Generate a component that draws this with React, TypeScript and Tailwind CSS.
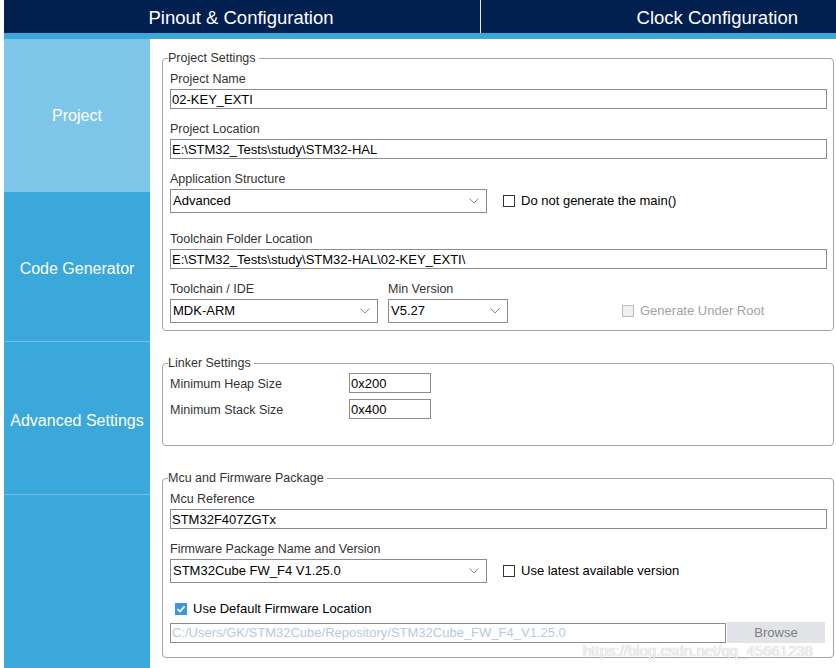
import type { ReactNode } from 'react'

const font = { fontFamily: '"Liberation Sans", Arial, sans-serif' }

function Chevron() {
  return (
    <svg width="10" height="6" viewBox="0 0 10 6" className="shrink-0">
      <path d="M0.5 0.5 L5 5 L9.5 0.5" fill="none" stroke="#8a8a8a" strokeWidth="1" />
    </svg>
  )
}

function Field({ value, className = '' }: { value: string; className?: string }) {
  return (
    <div className={`h-[20px] border border-[#8c8c8c] bg-white pl-[1px] flex items-center text-[13px] text-black leading-none ${className}`}>
      {value}
    </div>
  )
}

function Select({ value, className = '' }: { value: string; className?: string }) {
  return (
    <div className={`h-[24px] border border-[#8c8c8c] bg-white pl-[2px] pr-[7px] flex items-center justify-between text-[13px] text-black ${className}`}>
      <span>{value}</span>
      <Chevron />
    </div>
  )
}

function Check({ label, checked, disabled }: { label: string; checked?: boolean; disabled?: boolean }) {
  return (
    <div className="flex items-center gap-[6px] text-[13px]">
      {checked ? (
        <div className="w-[12px] h-[12px] bg-[#3e97dc] flex items-center justify-center">
          <svg width="10" height="10" viewBox="0 0 10 10">
            <path d="M1.5 5.2 L4 7.6 L8.6 2.4" fill="none" stroke="white" strokeWidth="1.6" />
          </svg>
        </div>
      ) : (
        <div className={`w-[12px] h-[12px] border ${disabled ? 'border-[#bcbcbc] bg-[#f0f0f0]' : 'border-[#333] bg-white'}`} />
      )}
      <span className={disabled ? 'text-[#a3a3a3]' : 'text-black'}>{label}</span>
    </div>
  )
}

function Label({ children, className = '' }: { children: ReactNode; className?: string }) {
  return <div className={`h-[15px] leading-[15px] text-[12.5px] text-[#333] ${className}`}>{children}</div>
}

function Group({ title, className = '', children }: { title: string; className?: string; children: ReactNode }) {
  return (
    <fieldset className={`border border-[#a5a5a5] rounded-[4px] pl-[7px] pr-[6px] ${className}`}>
      <legend className="-ml-[2px] pr-[3px] h-[16px] leading-[16px] text-[12.5px] text-[#333]">{title}</legend>
      {children}
    </fieldset>
  )
}

const sideItems = [
  { name: 'Project', h: 'h-[153px]', active: true, pad: 'pt-[2px]' },
  { name: 'Code Generator', h: 'h-[150px]', pad: 'pt-[4px]' },
  { name: 'Advanced Settings', h: 'h-[153px]', pad: 'pt-[6px]' },
]

export default function App() {
  return (
    <div className="relative w-[836px] h-[668px] overflow-hidden bg-white pl-[4px] flex flex-col" style={font}>
      {/* Top tabs */}
      <div className="h-[33px] bg-[#01204f] flex text-white text-[18.5px] shrink-0">
        <div className="w-[476px] pt-[3px] pr-[2px] flex items-center justify-center">Pinout &amp; Configuration</div>
        <div className="w-[1px] bg-[#e8ecf2]" />
        <div className="flex-1 pt-[3px] flex items-center justify-end pr-[38px]">Clock Configuration</div>
      </div>
      <div className="h-[6px] bg-[#3ba8dc] shrink-0" />

      <div className="flex flex-1 min-h-0">
        {/* Sidebar */}
        <div className="w-[146px] bg-[#3aa8db] flex flex-col text-white text-[16px]">
          {sideItems.map(s => (
            <div
              key={s.name}
              className={`${s.h} ${s.pad} flex items-center justify-center border-b ${s.active ? 'bg-[#7dc6ea] border-[#7dc6ea]' : 'border-[#74c0e8]'}`}
            >
              {s.name}
            </div>
          ))}
          <div className="flex-1" />
        </div>

        {/* Main */}
        <div className="flex-1 pl-[12px] pr-[2px]">
          <Group title="Project Settings" className="mt-[11px] pb-[7px]">
            <Label className="mt-[6px]">Project Name</Label>
            <Field value="02-KEY_EXTI" className="mt-[2px]" />
            <Label className="mt-[13px]">Project Location</Label>
            <Field value="E:\STM32_Tests\study\STM32-HAL" className="mt-[2px]" />
            <Label className="mt-[13px]">Application Structure</Label>
            <div className="mt-[2px] flex items-center">
              <Select value="Advanced" className="w-[317px]" />
              <div className="ml-[16px]">
                <Check label="Do not generate the main()" />
              </div>
            </div>
            <Label className="mt-[19px]">Toolchain Folder Location</Label>
            <Field value="E:\STM32_Tests\study\STM32-HAL\02-KEY_EXTI\" className="mt-[2px]" />
            <div className="mt-[13px] flex items-end">
              <div className="w-[208px]">
                <Label>Toolchain / IDE</Label>
                <Select value="MDK-ARM" className="mt-[2px]" />
              </div>
              <div className="ml-[10px] w-[120px]">
                <Label>Min Version</Label>
                <Select value="V5.27" className="mt-[2px]" />
              </div>
              <div className="ml-[114px] h-[24px] flex items-center">
                <Check label="Generate Under Root" disabled />
              </div>
            </div>
          </Group>

          <Group title="Linker Settings" className="mt-[24px] pb-[26px]">
            <div className="mt-[2px] flex flex-col gap-[6px]">
              {[
                ['Minimum Heap Size', '0x200'],
                ['Minimum Stack Size', '0x400'],
              ].map(([l, v]) => (
                <div key={l} className="flex items-center h-[20px]">
                  <div className="w-[179px] pt-[2px] text-[12.5px] text-[#333]">{l}</div>
                  <Field value={v} className="w-[82px]" />
                </div>
              ))}
            </div>
          </Group>

          <Group title="Mcu and Firmware Package" className="mt-[24px] pb-[14px]">
            <Label className="mt-[6px]">Mcu Reference</Label>
            <Field value="STM32F407ZGTx" className="mt-[2px]" />
            <Label className="mt-[13px]">Firmware Package Name and Version</Label>
            <div className="mt-[2px] flex items-center">
              <Select value="STM32Cube FW_F4 V1.25.0" className="w-[317px]" />
              <div className="ml-[16px]">
                <Check label="Use latest available version" />
              </div>
            </div>
            <div className="mt-[19px] pl-[5px] h-[14px] flex items-center">
              <Check label="Use Default Firmware Location" checked />
            </div>
            <div className="mt-[6px] flex items-center">
              <div className="w-[556px] h-[20px] border border-[#8c8c8c] bg-white pl-[1px] flex items-center text-[13px] text-[#b7c9de]">
                C:/Users/GK/STM32Cube/Repository/STM32Cube_FW_F4_V1.25.0
              </div>
              <div className="ml-[1px] w-[98px] h-[21px] bg-[#e1e3e6] flex items-center justify-center text-[13px] text-[#7f7f7f]">
                Browse
              </div>
            </div>
          </Group>
        </div>
      </div>

      {/* watermark */}
      <div className="absolute left-[583px] top-[640px] text-[15px] text-[#f4f4f4] [text-shadow:0_0_1px_#a8a8a8]">
        https://blog.csdn.net/qq_45661238
      </div>
    </div>
  )
}
